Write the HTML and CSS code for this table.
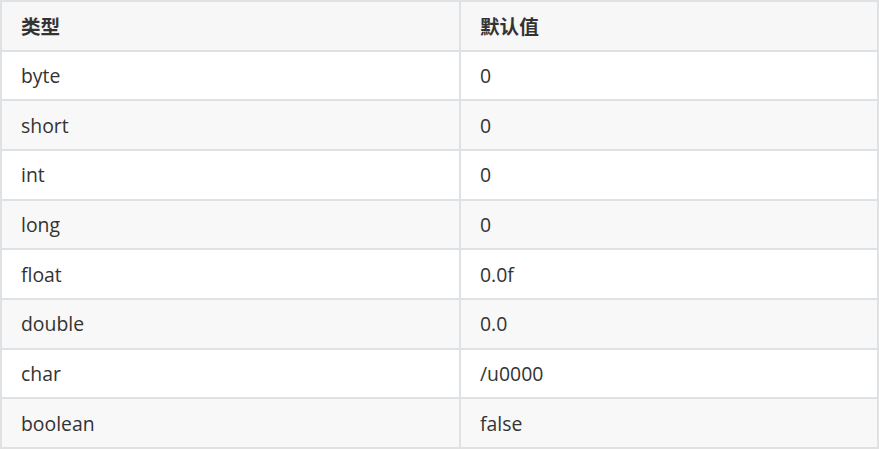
FILE: index.html
```html
<!DOCTYPE html>
<html lang="zh">
<head>
<meta charset="utf-8">
<link rel="stylesheet" href="styles.css">
</head>
<body>
<table class="types">
  <thead>
    <tr><th class="col-type">类型</th><th>默认值</th></tr>
  </thead>
  <tbody>
    <tr><td>byte</td><td>0</td></tr>
    <tr><td>short</td><td>0</td></tr>
    <tr><td>int</td><td>0</td></tr>
    <tr><td>long</td><td>0</td></tr>
    <tr><td>float</td><td>0.0f</td></tr>
    <tr><td>double</td><td>0.0</td></tr>
    <tr><td>char</td><td>/u0000</td></tr>
    <tr><td>boolean</td><td>false</td></tr>
  </tbody>
</table>
</body>
</html>
```

FILE: styles.css
```css
html, body {
  margin: 0;
  padding: 0;
  background: #ffffff;
}
.types {
  border-collapse: collapse;
  width: 879px;
  font-family: "Open Sans", "Noto Sans CJK SC", sans-serif;
  font-size: 19.4px;
  color: #333333;
}
.types th,
.types td {
  border: 2px solid #dfe2e5;
  height: 49.67px;
  padding: 0 19px;
  text-align: left;
  vertical-align: middle;
  box-sizing: border-box;
}
.types th {
  font-family: "Noto Sans CJK SC", "Open Sans", sans-serif;
  font-size: 19.6px;
  font-weight: 700;
  background: #f7f7f7;
}
.col-type {
  width: 459px;
}
.types tbody tr:nth-child(even) td {
  background: #f8f8f8;
}
.types tbody tr:nth-child(odd) td {
  background: #ffffff;
}
```
